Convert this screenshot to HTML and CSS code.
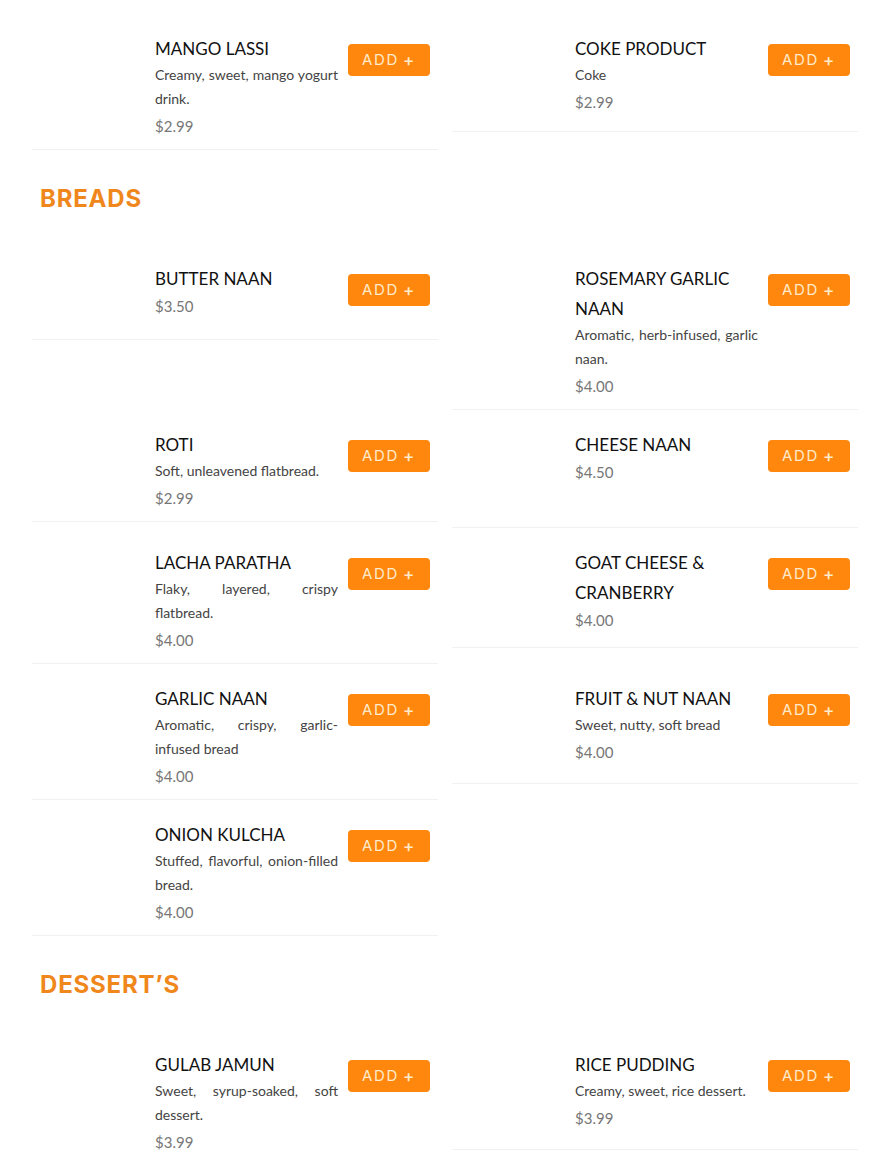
FILE: index.html
```html
<!DOCTYPE html>
<html lang="en">
<head>
<meta charset="utf-8">
<title>Menu</title>
<link rel="stylesheet" href="styles.css">
</head>
<body>
<main class="menu">
  <section class="grid">
    <article class="card">
      <div class="thumb"></div>
      <div class="info">
        <h3 class="name">MANGO LASSI</h3>
        <p class="desc">Creamy, sweet, mango yogurt drink.</p>
        <p class="price">$2.99</p>
      </div>
      <button class="add">ADD <span class="plus">+</span></button>
    </article>
    <article class="card">
      <div class="thumb thumb-tall"></div>
      <div class="info">
        <h3 class="name">COKE PRODUCT</h3>
        <p class="desc">Coke</p>
        <p class="price">$2.99</p>
      </div>
      <button class="add">ADD <span class="plus">+</span></button>
    </article>
  </section>

  <h2 class="section-title">BREADS</h2>
  <section class="grid">
    <article class="card">
      <div class="thumb"></div>
      <div class="info">
        <h3 class="name">BUTTER NAAN</h3>
        <p class="price">$3.50</p>
      </div>
      <button class="add">ADD <span class="plus">+</span></button>
    </article>
    <article class="card">
      <div class="thumb"></div>
      <div class="info">
        <h3 class="name">ROSEMARY GARLIC NAAN</h3>
        <p class="desc">Aromatic, herb-infused, garlic naan.</p>
        <p class="price">$4.00</p>
      </div>
      <button class="add">ADD <span class="plus">+</span></button>
    </article>
    <article class="card">
      <div class="thumb"></div>
      <div class="info">
        <h3 class="name">ROTI</h3>
        <p class="desc">Soft, unleavened flatbread.</p>
        <p class="price">$2.99</p>
      </div>
      <button class="add">ADD <span class="plus">+</span></button>
    </article>
    <article class="card">
      <div class="thumb thumb-tall"></div>
      <div class="info">
        <h3 class="name">CHEESE NAAN</h3>
        <p class="price">$4.50</p>
      </div>
      <button class="add">ADD <span class="plus">+</span></button>
    </article>
    <article class="card">
      <div class="thumb"></div>
      <div class="info">
        <h3 class="name">LACHA PARATHA</h3>
        <p class="desc">Flaky, layered, crispy flatbread.</p>
        <p class="price">$4.00</p>
      </div>
      <button class="add">ADD <span class="plus">+</span></button>
    </article>
    <article class="card">
      <div class="thumb thumb-xl"></div>
      <div class="info">
        <h3 class="name">GOAT CHEESE &amp; CRANBERRY</h3>
        <p class="price">$4.00</p>
      </div>
      <button class="add">ADD <span class="plus">+</span></button>
    </article>
    <article class="card">
      <div class="thumb"></div>
      <div class="info">
        <h3 class="name">GARLIC NAAN</h3>
        <p class="desc">Aromatic, crispy, garlic-infused bread</p>
        <p class="price">$4.00</p>
      </div>
      <button class="add">ADD <span class="plus">+</span></button>
    </article>
    <article class="card">
      <div class="thumb thumb-xl"></div>
      <div class="info">
        <h3 class="name">FRUIT &amp; NUT NAAN</h3>
        <p class="desc">Sweet, nutty, soft bread</p>
        <p class="price">$4.00</p>
      </div>
      <button class="add">ADD <span class="plus">+</span></button>
    </article>
    <article class="card">
      <div class="thumb"></div>
      <div class="info">
        <h3 class="name">ONION KULCHA</h3>
        <p class="desc">Stuffed, flavorful, onion-filled bread.</p>
        <p class="price">$4.00</p>
      </div>
      <button class="add">ADD <span class="plus">+</span></button>
    </article>
  </section>

  <h2 class="section-title">DESSERT’S</h2>
  <section class="grid">
    <article class="card">
      <div class="thumb"></div>
      <div class="info">
        <h3 class="name">GULAB JAMUN</h3>
        <p class="desc">Sweet, syrup-soaked, soft dessert.</p>
        <p class="price">$3.99</p>
      </div>
      <button class="add">ADD <span class="plus">+</span></button>
    </article>
    <article class="card">
      <div class="thumb thumb-xl"></div>
      <div class="info">
        <h3 class="name">RICE PUDDING</h3>
        <p class="desc">Creamy, sweet, rice dessert.</p>
        <p class="price">$3.99</p>
      </div>
      <button class="add">ADD <span class="plus">+</span></button>
    </article>
  </section>
</main>
</body>
</html>
```

FILE: styles.css
```css
* { box-sizing: border-box; }

html, body {
  margin: 0;
  padding: 0;
  background: #ffffff;
}

body {
  font-family: Lato, "Liberation Sans", sans-serif;
  color: #111;
}

.menu {
  padding: 34px 32px 0 32px;
}

.grid {
  display: grid;
  grid-template-columns: 406px 406px;
  column-gap: 14px;
  row-gap: 20px;
  align-items: start;
}

.card {
  display: flex;
  align-items: flex-start;
  gap: 10px;
  padding: 0 8px 11px 0;
  border-bottom: 1px solid #f1f1f1;
}

.thumb {
  flex: 0 0 113px;
  height: 64px;
}

.thumb-tall {
  height: 86px;
}

.thumb-xl {
  height: 88px;
}

.info {
  flex: 1 1 auto;
  min-width: 0;
}

.name {
  margin: 0;
  font-size: 17px;
  line-height: 30px;
  font-weight: 400;
  color: #111;
}

.desc {
  margin: -1px 0 0 0;
  font-size: 14px;
  line-height: 24px;
  color: #444;
  text-align: justify;
}

.price {
  margin: 0;
  font-size: 15px;
  line-height: 24px;
  color: #777;
}

.desc + .price {
  margin-top: 3px;
}

.add {
  flex: 0 0 82px;
  height: 32px;
  margin-top: 10px;
  border: none;
  border-radius: 4px;
  background: #ff870d;
  color: #ffeacb;
  font-family: Inter, "Open Sans", sans-serif;
  font-size: 15px;
  font-weight: 400;
  letter-spacing: 1.6px;
  display: flex;
  align-items: center;
  justify-content: center;
  gap: 4px;
  padding: 0 0 1px 0;
  cursor: pointer;
}

.plus {
  font-size: 17px;
  font-weight: 500;
}

.section-title {
  margin: 34px 0 50px 8px;
  font-family: Inter, "Open Sans", sans-serif;
  font-size: 24px;
  line-height: 30px;
  font-weight: 700;
  letter-spacing: 0.8px;
  color: #ef871c;
}
```
